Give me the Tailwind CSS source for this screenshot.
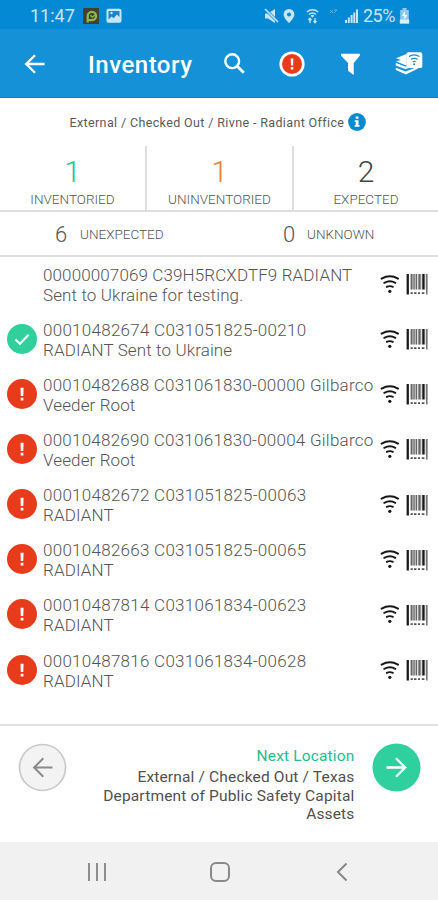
<!DOCTYPE html>
<html lang="en">
<head>
<meta charset="utf-8">
<title>Inventory</title>
<script src="https://cdn.jsdelivr.net/npm/@tailwindcss/browser@4"></script>
</head>
<body class="w-[438px] h-[900px] overflow-hidden bg-white font-['Roboto',sans-serif]">
<svg class="hidden">
  <symbol id="rfid" viewBox="0 0 20 20">
    <g fill="none" stroke="#161616" stroke-width="2" stroke-linecap="round"><path d="M1.6 4.6Q10 0 18 4.6"/><path d="M4.3 8.8Q10 5.8 15.3 8.8"/><path d="M6.7 12.9Q9.8 11.2 12.9 12.9" stroke-width="1.8"/></g>
    <circle cx="9.8" cy="17.3" r="1.6" fill="#161616"/>
  </symbol>
  <symbol id="barcode" viewBox="0 0 22 22">
    <path d="M4.2 1h17.4v15.5H4.2z" fill="#ddd"/>
    <path d="M.6 1h2.3v20.4H.6zM16.3 1h2.3v15.5h-2.3z" fill="#1b1b1b"/>
    <path d="M4.7 1h1.8v15.5H4.7zM7.4 1h1.3v15.5H7.4zM9.7 1h1.3v15.5H9.7zM12.4 1h2.2v15.5h-2.2z" fill="#666"/>
    <path d="M20 1h1.6v20.4H20z" fill="#777"/>
    <path d="M4.6 19.2h2.2v1.8H4.6zM8 19.2h2.5v1.8H8zM12 19.2h2v1.8h-2zM15.8 19.2h2.6v1.8h-2.6z" fill="#555"/>
  </symbol>
  <symbol id="alert" viewBox="0 0 30 30"><circle cx="15" cy="15" r="15" fill="#e83b1b"/><path d="M13.5 8.7h3.1l-.3 8.4h-2.5zM13.7 18.8h2.7v2.6h-2.7z" fill="#fff"/></symbol>
  <symbol id="check" viewBox="0 0 30 30"><circle cx="15" cy="15" r="15" fill="#31cf9b"/><path d="M8.5 15.5l4.4 4.2 8.7-9" fill="none" stroke="#fff" stroke-width="2.2"/></symbol>
</svg>

<div class="flex flex-col h-[900px]">
  <div class="h-[29px] shrink-0 bg-[#0489d4] flex items-center text-[#c6e6f8] pl-[30px] pr-[27px] pt-[2px]">
    <span class="text-[18px] w-[45px]">11:47</span>
    <svg class="ml-[8px] w-4 h-4" viewBox="0 0 16 16"><path fill="#403f34" d="M0 0h16v16H0z"/><path d="M4.7 14.5V8a4.2 4.2 0 1 1 4.2 4.2H5" fill="none" stroke="#8cb849" stroke-width="2.3"/><path d="M7.3 7.2l2 1.8 2.7-2" fill="none" stroke="#8cb849" stroke-width="1.4"/></svg>
    <svg class="ml-[7px] w-4 h-4" viewBox="0 0 16 16"><rect x=".5" y=".8" width="15" height="14" rx="2" fill="#c6e6f8"/><path d="M2.5 3h11v6l-2.6-2.5-3.4 3.7-2-1.7-3 3z" fill="#1787c6"/><circle cx="5.5" cy="5" r="1.2" fill="#c6e6f8"/></svg>
    <svg class="ml-auto w-[15px] h-4" viewBox="0 0 15 16"><path d="M1 5.5h3L11 1v14l-7-4.5H1z" fill="#c6e6f8"/><path d="M1 1l13 13" stroke="#0489d4" stroke-width="3"/><path d="M1 1l13 13" stroke="#c6e6f8" stroke-width="1.6"/></svg>
    <svg class="ml-[4px] w-[12px] h-4" viewBox="0 0 12 16"><path d="M6 1a5.4 5.4 0 0 0-5.4 5.4C.6 10 6 15 6 15s5.4-5 5.4-8.6A5.4 5.4 0 0 0 6 1zm0 3.5a2 2 0 1 1 0 4 2 2 0 0 1 0-4z" fill="#c6e6f8"/></svg>
    <svg class="ml-[11px] w-[13px] h-4" viewBox="0 0 13 16" fill="none" stroke="#c6e6f8"><path d="M.8 4Q6.5-.4 12.2 4M3 6.3q3.5-2.8 7 0" stroke-width="1.5"/><path d="M5 7.6h3L6.5 9z" fill="#c6e6f8"/><path d="M4 15v-4.5M2.5 12L4 10.2 5.5 12M9 10v4.5M7.5 13L9 14.8l1.5-1.8" stroke-width="1.3"/></svg>
    <svg class="ml-[10px] w-[9px] h-4" viewBox="0 0 9 16" fill="none" stroke="#58b0df"><path d="M1 2l3 3M4 2L1 5M8 2L5 5M5 2h3"/></svg>
    <svg class="ml-[7px] w-[13px] h-4" viewBox="0 0 13 16" fill="#c6e6f8"><path d="M0 12h2v3H0zM2.8 9.5h2V15h-2zM5.6 7h2v8h-2zM8.3 4.5h2V15h-2zM11 1.5h2V15h-2z"/></svg>
    <span class="ml-[5px] text-[18px] w-[34px] tracking-[-.5px]">25%</span>
    <svg class="ml-[2px] mr-[1px] w-[11px] h-4" viewBox="0 0 11 16"><path d="M3.5 0h4v2h2.3v13.5H1.2V2h2.3z" fill="#8ecbed"/><path d="M.8 11.5h9.4V15.5H.8z" fill="#d7effb"/><path d="M6 3L3 8h2.3v3.5L8.4 7H6z" fill="#fff"/></svg>
  </div>

  <header class="h-[69px] shrink-0 bg-[#1592d7] border-b border-[#1080c2] flex items-center text-white">
    <svg class="ml-[24px] mt-[2px] w-[22px] h-[22px]" viewBox="0 0 22 22" fill="none" stroke="#fff" stroke-width="2.3"><path d="M20.5 11H2.5M11 2.2L2.2 11l8.8 8.8"/></svg>
    <h1 class="ml-[42px] mt-[3px] w-[135px] text-[24px] leading-none font-medium tracking-[.5px]">Inventory</h1>
    <svg class="w-[23px] h-[23px]" viewBox="0 0 23 23" fill="none" stroke="#fff"><circle cx="9.2" cy="9.2" r="6.9" stroke-width="2.4"/><path d="M14 14l6.8 6.8" stroke-width="2.8"/></svg>
    <svg class="ml-[33px] mt-[1px] w-[26px] h-[26px]" viewBox="0 0 26 26"><circle cx="13" cy="13" r="12.6" fill="#fff"/><circle cx="13" cy="13" r="10" fill="#e83b1b"/><path d="M11.7 7.5h2.7l-.3 6.9h-2.1zM11.8 16h2.5v2.5h-2.5z" fill="#fff"/></svg>
    <svg class="ml-[36px] mt-[2px] w-[19px] h-[23px]" viewBox="0 0 19 23"><path d="M.2.8h18.6v2L12.7 10v12L7 17.7V10L.2 2.8z" fill="#fff"/></svg>
    <svg class="ml-[35px] w-[28px] h-[25px]" viewBox="0 0 28 25"><path d="M1 7.2L11.5 3v10.5l-1 .8L1 10.2 6 9zM.8 12l9.5 3.8 3.2-1v2.2l-2.7 1.2L.8 14.5zM.8 16.8l10 3.8 9.7-4.2 3 .8-12.6 6.3L.8 19z" fill="#fff"/><path d="M1 13l9 3.8 7-2.2" stroke="#fff" stroke-width="1.5" fill="none"/><rect x="11.3" y="1.3" width="16" height="15.8" rx="2.2" fill="#fff"/><path d="M14 5.6q5-3.3 10.5 0M15.9 8.3q3.4-2 6.7 0M17.7 10.8q1.6-.8 3.1 0" stroke="#178dcc" stroke-width="1.2" fill="none"/><circle cx="19.2" cy="13.3" r="1" fill="#178dcc"/></svg>
  </header>

  <div class="h-[48px] shrink-0 flex items-center pl-[69.5px] text-[12.5px] text-[#5a5a5a]">
    <span class="mt-[2px] w-[275px] whitespace-nowrap tracking-[.37px]">External / Checked Out / Rivne - Radiant Office</span>
    <svg class="ml-[3px] w-[18px] h-[18px]" viewBox="0 0 18 18"><circle cx="9" cy="9" r="8.9" fill="#078bd0"/><path d="M7.7 3.6h2.8v2.2H7.7zM6.7 7.3h3.8v4.8h1v1.6H6.7v-1.6h1V8.8h-1z" fill="#fff"/></svg>
  </div>

  <section class="h-[66px] shrink-0 grid grid-cols-[147px_147px_144px] border-b-2 border-[#dedede] text-center">
    <div class="border-r-2 border-[#dedede] flex flex-col items-center pt-[11px]"><b class="text-[30px] leading-[30px] font-light text-[#24c691]">1</b><span class="mt-[4px] text-[13.5px] leading-[16px] font-light text-[#555]">INVENTORIED</span></div>
    <div class="border-r-2 border-[#dedede] flex flex-col items-center pt-[11px]"><b class="text-[30px] leading-[30px] font-light text-[#ec7e2c]">1</b><span class="mt-[4px] text-[13.5px] leading-[16px] font-light text-[#555]">UNINVENTORIED</span></div>
    <div class="flex flex-col items-center pt-[11px]"><b class="text-[30px] leading-[30px] font-light text-[#444]">2</b><span class="mt-[4px] text-[13.5px] leading-[16px] font-light text-[#555]">EXPECTED</span></div>
  </section>
  <section class="h-[45px] shrink-0 flex items-center border-b-2 border-[#dedede] text-[#555] font-light">
    <span class="ml-[55px] mt-[2px] w-[25px] text-[22px]">6</span><span class="mt-[2px] w-[203px] text-[13.5px]">UNEXPECTED</span>
    <span class="mt-[2px] w-[24px] text-[22px]">0</span><span class="mt-[2px] text-[13.5px]">UNKNOWN</span>
  </section>

  <main id="assets" class="h-[467px] shrink-0 -mt-px mb-px text-[17px] leading-[20px] font-light text-[#555]"></main>

  <footer class="h-[118px] shrink-0 border-t-2 border-[#e2e2e2] flex items-start pl-[18px] pr-[17px]">
    <svg class="mt-[17px] w-[49px] h-[49px]" viewBox="0 0 49 49" fill="none"><circle cx="24.5" cy="24.5" r="23" fill="#f3f3f3" stroke="#c9c9c9" stroke-width="1.7"/><path d="M34.5 24.5h-18M25.3 15.3l-9.2 9.2 9.2 9.2" stroke="#8a8a8a" stroke-width="2"/></svg>
    <div class="flex-1 mt-[20px] mr-[17.5px] text-right text-[15.5px] leading-[18.7px] tracking-[.16px] text-[#505050] whitespace-nowrap"><div class="text-[#24bd8c] leading-[20px] mb-[2px]">Next Location</div>External / Checked Out / Texas<br>Department of Public Safety Capital<br>Assets</div>
    <svg class="mt-[17px] w-[49px] h-[49px]" viewBox="0 0 49 49" fill="none"><circle cx="24.5" cy="24.5" r="24" fill="#2fd09e"/><path d="M14.5 24.5h18M24 15.3l9.2 9.2-9.2 9.2" stroke="#fff" stroke-width="2.3"/></svg>
  </footer>

  <nav class="h-[58px] shrink-0 bg-[#f1f1f1] flex items-center pl-[87px] pt-[2px]">
    <svg class="w-5 h-5" viewBox="0 0 20 20"><path d="M2 1v18M10 1v18M18 1v18" stroke="#888" stroke-width="1.9"/></svg>
    <svg class="ml-[102px] w-[22px] h-[22px]" viewBox="0 0 22 22"><rect x="2" y="2" width="18" height="18" rx="5" fill="none" stroke="#888" stroke-width="2"/></svg>
    <svg class="ml-[105px] w-[12px] h-5" viewBox="0 0 12 20"><path d="M10.5 1.5L2 10l8.5 8.5" fill="none" stroke="#888" stroke-width="2"/></svg>
  </nav>
</div>
<script>
  const assets = [
    ['', 'tracking-[.12px]', '00000007069 C39H5RCXDTF9 RADIANT', 'Sent to Ukraine for testing.'],
    ['check', 'tracking-[.27px]', '00010482674 C031051825-00210', 'RADIANT Sent to Ukraine'],
    ['alert', 'tracking-[.24px]', '00010482688 C031061830-00000 Gilbarco', 'Veeder Root'],
    ['alert', 'tracking-[.24px]', '00010482690 C031061830-00004 Gilbarco', 'Veeder Root'],
    ['alert', 'tracking-[.27px]', '00010482672 C031051825-00063', 'RADIANT'],
    ['alert', 'tracking-[.27px]', '00010482663 C031051825-00065', 'RADIANT'],
    ['alert', 'tracking-[.27px]', '00010487814 C031061834-00623', 'RADIANT'],
    ['alert', 'tracking-[.27px]', '00010487816 C031061834-00628', 'RADIANT'],
  ];
  document.getElementById('assets').innerHTML = assets.map(([icon, tracking, first, second]) => `
    <div class="h-[55.15px] flex items-center pl-[7px]">
      <svg class="w-[30px] h-[30px]">${icon ? `<use href="#${icon}"/>` : ''}</svg>
      <p class="mt-[2px] ml-[6px] w-[337px] whitespace-nowrap tracking-[.12px]"><span class="${tracking}">${first}</span><br>${second}</p>
      <svg class="w-5 h-5"><use href="#rfid"/></svg>
      <svg class="mt-px ml-[6px] w-[22px] h-[22px]"><use href="#barcode"/></svg>
    </div>`).join('');
</script>
</body>
</html>
